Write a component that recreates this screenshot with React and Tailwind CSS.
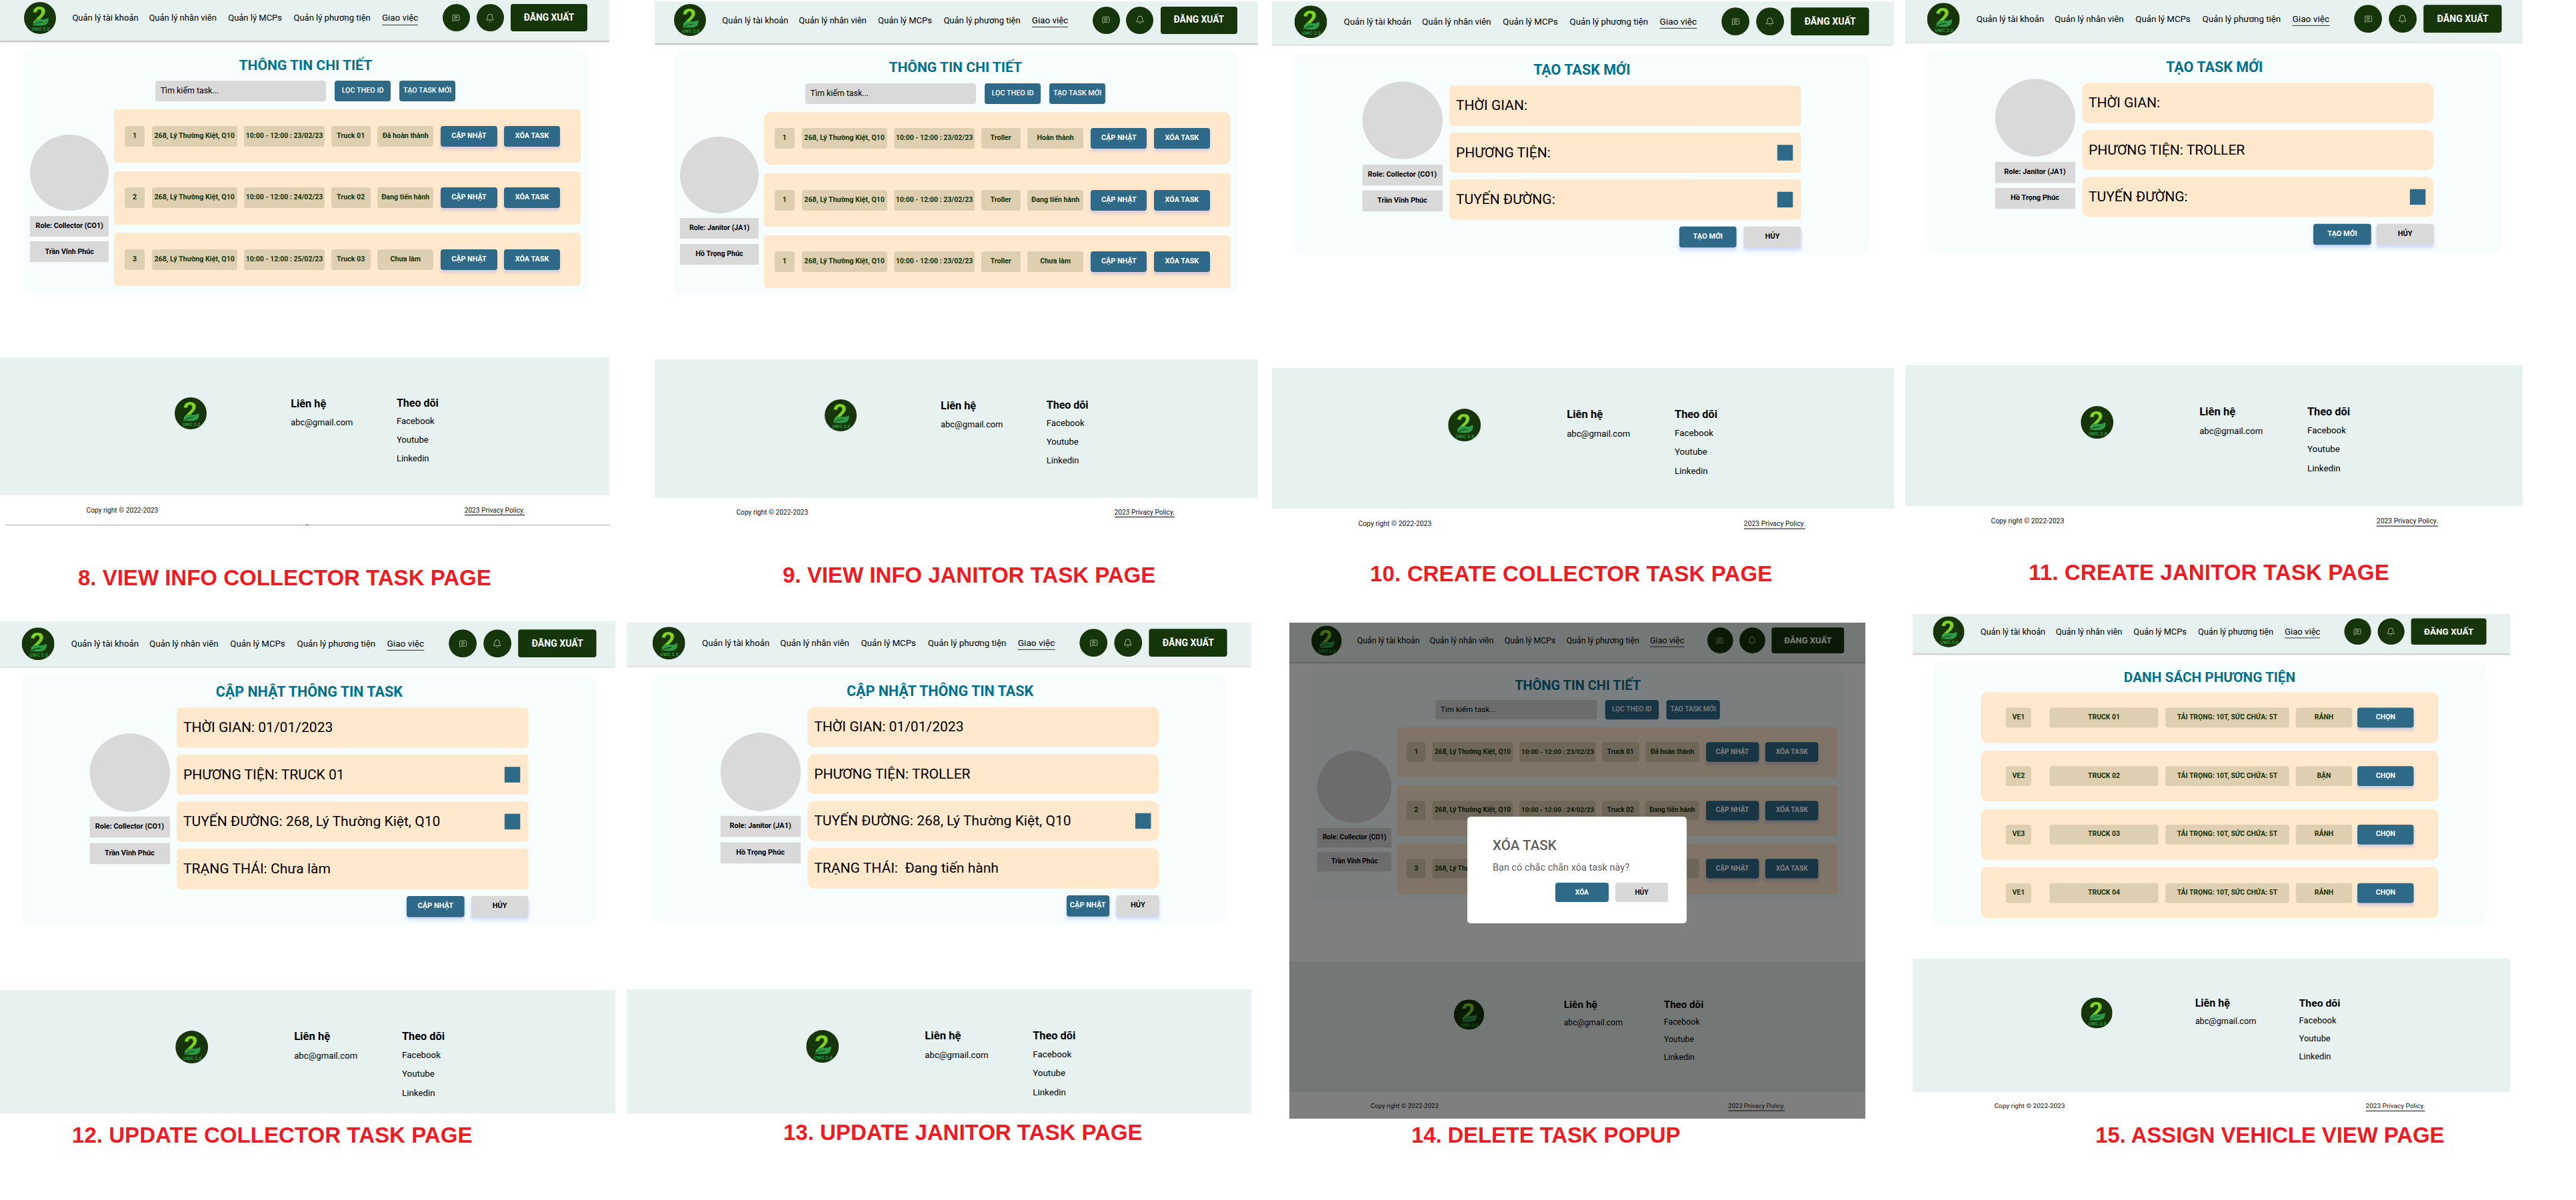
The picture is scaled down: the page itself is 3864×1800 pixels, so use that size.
import { Bell, MessageSquareText } from "lucide-react";

const BTN_SHADOW = "shadow-[0_4px_4px_rgba(110,130,255,0.28)]";

function Logo() {
  return (
    <svg viewBox="0 0 48 48" className="size-[48px] shrink-0">
      <defs>
        <linearGradient id="lime" x1="0" y1="0" x2="0" y2="1">
          <stop offset="0" stopColor="#86d61f" />
          <stop offset="1" stopColor="#6fc928" />
        </linearGradient>
      </defs>
      <circle cx="24" cy="24" r="24" fill="#16350a" />
      <text x="23" y="33" textAnchor="middle" fontFamily="Roboto" fontWeight="700" fontSize="37" fill="url(#lime)">
        2
      </text>
      <path d="M13 36 C14.5 28 19 25 25 26 C30 27 33 25.5 36.5 24 C37.5 31.5 34 35.5 25 35.5 C20 35.5 16 34.5 13 36 Z" fill="#2c9a46" />
      <path d="M14 35.5 C17.5 31.5 22 30.5 28 30.3" fill="none" stroke="#16350a" strokeWidth="1" />
      <text x="25" y="43.2" textAnchor="middle" fontFamily="Roboto" fontWeight="700" fontSize="6.8" textLength="27" fill="#2c9a46">
        UWC 2.0
      </text>
    </svg>
  );
}

function Header({ pad, lift }) {
  return (
    <header className={`flex h-[69px] items-center bg-[#e7f1ef] shadow-[0_2px_2px_rgba(0,0,0,0.28)] ${pad} ${lift}`}>
      <Logo />
      <nav className="ml-[24.5px] flex w-[555.4px] items-center text-[13px] leading-none text-black">
        <span className="w-[115px]">Quản lý tài khoản</span>
        <span className="w-[118.8px]">Quản lý nhân viên</span>
        <span className="w-[98.3px]">Quản lý MCPs</span>
        <span className="w-[132.4px]">Quản lý phương tiện</span>
        <span className="relative text-[13.4px]">
          Giao việc
          <span className="absolute inset-x-0 -bottom-[4px] h-px bg-[#333]" />
        </span>
      </nav>
      <div className="flex size-[41px] shrink-0 items-center justify-center rounded-full bg-[#16350a]">
        <MessageSquareText size={12} strokeWidth={1.6} className="text-[#c3cdbf]" />
      </div>
      <div className="ml-[9.8px] flex size-[41px] shrink-0 items-center justify-center rounded-full bg-[#16350a]">
        <Bell size={14} strokeWidth={1.5} className="text-[#c3cdbf]" />
      </div>
      <div className="ml-[10.4px] flex h-[41px] w-[115px] shrink-0 items-center justify-center rounded-[4px] bg-[#16350a] text-[13.8px] leading-none font-bold text-white">
        ĐĂNG XUẤT
      </div>
    </header>
  );
}

function Footer({ shift, legal }) {
  return (
    <footer>
      <div className="h-[207.6px] bg-[#e7f1ef] pt-[60px]">
        <div className={`flex text-black ${shift}`}>
          <div className="w-[226px] shrink-0" />
          <Logo />
          <div className="ml-[126.3px] w-[158.7px] leading-none">
            <div className="mt-[3px] flex h-[14px] items-center text-[16.3px] font-bold">Liên hệ</div>
            <div className="mt-[14.4px] flex h-[14px] items-center text-[12.9px]">abc@gmail.com</div>
          </div>
          <div className="leading-none">
            <div className="mt-[2px] flex h-[14px] items-center text-[16px] font-bold">Theo dõi</div>
            <div className="mt-[12.7px] flex h-[14px] items-center text-[13.1px]">Facebook</div>
            <div className="mt-[14px] flex h-[14px] items-center text-[13.1px]">Youtube</div>
            <div className="mt-[14px] flex h-[14px] items-center text-[13.1px]">Linkedin</div>
          </div>
        </div>
      </div>
      {legal && (
        <div className={`flex h-[45px] items-center text-[10.2px] leading-none whitespace-nowrap text-[#111] ${shift}`}>
          <span className="ml-[93.7px] w-[567.1px] shrink-0">Copy right © 2022-2023</span>
          <span className="relative">
            2023 Privacy Policy.
            <span className="absolute inset-x-0 -bottom-[2px] h-px bg-black" />
          </span>
        </div>
      )}
    </footer>
  );
}

function Profile({ role, name, offset, left }) {
  return (
    <div className={`w-[118px] shrink-0 text-[10.7px] leading-none font-bold text-black ${left} ${offset}`}>
      <div className="h-[114.4px] rounded-[50%] bg-[#d9d9d9]" />
      <div className="mt-[7.5px] flex h-[31px] items-center justify-center bg-[#d9d9d9]">{role}</div>
      <div className="mt-[7.6px] flex h-[31px] items-center justify-center bg-[#d9d9d9]">{name}</div>
    </div>
  );
}

function Title({ children }) {
  return (
    <h1 className="flex h-[47px] items-center justify-center text-[21.1px] leading-none font-bold text-[#04718c]">{children}</h1>
  );
}

function Pill({ children, width }) {
  return (
    <div className={`flex h-[31px] shrink-0 items-center justify-center rounded-[4px] bg-[#ddcfaf] text-[#16350a] ${width}`}>
      {children}
    </div>
  );
}

function Action({ children, width = "w-[84.3px]", tone = "bg-[#2e6a87] text-white" }) {
  return (
    <div className={`flex h-[31px] shrink-0 items-center justify-center rounded-[4px] text-[10.8px] leading-none font-bold ${BTN_SHADOW} ${tone} ${width}`}>
      {children}
    </div>
  );
}

function TaskList({ role, name, rows, firstRadius = "first:rounded-[5px]" }) {
  return (
    <section className="h-[364.8px] w-[845px] rounded-[10px] bg-[#f7fdfd]">
      <Title>THÔNG TIN CHI TIẾT</Title>
      <div className="flex pl-[197.3px] leading-none">
        <div className="flex h-[31px] w-[255.7px] items-center rounded-[4px] bg-[#d9d9d9] pl-[7.5px] text-[12.4px] text-black">
          Tìm kiếm task...
        </div>
        <div className="ml-[13px] flex h-[31px] w-[84.5px] items-center justify-center rounded-[4px] bg-[#2e6a87] text-[10.8px] font-medium text-white">
          LỌC THEO ID
        </div>
        <div className="ml-[12.6px] flex h-[31px] w-[84.5px] items-center justify-center rounded-[4px] bg-[#2e6a87] text-[10.8px] font-medium text-white">
          TẠO TASK MỚI
        </div>
      </div>
      <div className="mt-[12.3px] flex">
        <Profile role={role} name={name} left="ml-[9.3px]" offset="mt-[37.6px]" />
        <div className="ml-[8.2px] flex flex-col gap-[12.8px]">
          {rows.map((r, i) => (
            <div
              key={i}
              className={`flex h-[79.7px] w-[699.6px] items-center rounded-[5px] bg-[#ffe8cc] pl-[15.5px] text-[10.7px] leading-none font-bold whitespace-nowrap ${firstRadius}`}
            >
              <Pill width="w-[30.3px]">{r[0]}</Pill>
              <Pill width="ml-[10.5px] w-[128px]">268, Lý Thường Kiệt, Q10</Pill>
              <Pill width="ml-[10.6px] w-[120.6px] text-[10.5px]">{r[1]}</Pill>
              <Pill width="ml-[9.9px] w-[58.9px]">{r[2]}</Pill>
              <Pill width="ml-[10.5px] w-[84.2px]">{r[3]}</Pill>
              <Action width="ml-[11px] w-[84.2px]">CẬP NHẬT</Action>
              <Action width="ml-[10.4px] w-[84.2px]">XÓA TASK</Action>
            </div>
          ))}
        </div>
      </div>
    </section>
  );
}

function TaskForm({ title, role, name, avatar, fields, radius, submit, size, buttonWidth, gap }) {
  return (
    <section className={`w-[845px] rounded-[10px] bg-[#f7fdfd] ${size}`}>
      <Title>{title}</Title>
      <div className="flex">
        <Profile role={role} name={name} left="ml-[99.4px]" offset={avatar} />
        <div className="ml-[10.3px] flex w-[517.3px] flex-col gap-[10px]">
          {fields.map(([label, picker]) => (
            <div
              key={label}
              className={`flex h-[59.2px] items-center justify-between bg-[#ffe8cc] pr-[11.8px] pl-[9.7px] text-[20.65px] leading-none whitespace-pre text-black ${radius}`}
            >
              {label}
              {picker && <div className="size-[23.3px] bg-[#2e6a87]" />}
            </div>
          ))}
          <div className={`flex justify-end ${gap}`}>
            <Action width={buttonWidth}>{submit}</Action>
            <Action width={buttonWidth} tone="bg-[#d9d9d9] text-black">
              HỦY
            </Action>
          </div>
        </div>
      </div>
    </section>
  );
}

function VehicleList() {
  const rows = [
    ["VE1", "TRUCK 01", "RẢNH"],
    ["VE2", "TRUCK 02", "BẬN"],
    ["VE3", "TRUCK 03", "RẢNH"],
    ["VE1", "TRUCK 04", "RẢNH"],
  ];
  return (
    <section className="h-[410.7px] w-[845px] rounded-[10px] bg-[#f7fdfd]">
      <Title>DANH SÁCH PHƯƠNG TIỆN</Title>
      <div className="ml-[73px] flex flex-col gap-[11.4px]">
        {rows.map((r, i) => (
          <div
            key={i}
            className="flex h-[79.5px] w-[699.4px] items-center rounded-[10px] bg-[#ffe8cc] pl-[38px] text-[10.6px] leading-none font-bold whitespace-nowrap"
          >
            <Pill width="w-[39.3px]">{r[0]}</Pill>
            <Pill width="ml-[27.7px] w-[166.4px]">{r[1]}</Pill>
            <Pill width="ml-[10.6px] w-[188.8px]">TẢI TRỌNG: 10T, SỨC CHỨA: 5T</Pill>
            <Pill width="ml-[10.6px] w-[85.3px]">{r[2]}</Pill>
            <Action width="ml-[8.8px] w-[85.4px]">CHỌN</Action>
          </div>
        ))}
      </div>
    </section>
  );
}

/* One mock-up: a clipped window that holds a scaled page, with its caption below. */
function Board({ place, frame, page, pad, shift, lift, caption, captionPlace, overlay, rule, legal = true, children }) {
  return (
    <div className={`flex shrink-0 flex-col ${place}`}>
      <div className={`relative overflow-hidden bg-white ${frame}`}>
        <div className={`origin-top-left ${page}`}>
          <Header pad={pad} lift={lift} />
          <main className={`h-[474.5px] pt-[12.8px] ${shift}`}>{children}</main>
          <Footer shift={shift} legal={legal} />
        </div>
        {overlay}
      </div>
      {rule}
      <h2 className={`flex h-10 items-center font-['Liberation_Sans',Arial,sans-serif] text-[33px] leading-none font-bold whitespace-nowrap text-[#ed1c24] ${captionPlace}`}>
        {caption}
      </h2>
    </div>
  );
}

function DeletePopup() {
  return (
    <div className="absolute inset-0 bg-black/50">
      <div className="absolute top-[291px] left-[267px] h-[160px] w-[329px] rounded-[5px] bg-white pl-[38px] leading-none text-[#606060]">
        <div className="mt-[33.5px] flex h-5 items-center text-[20.6px] font-medium">XÓA TASK</div>
        <div className="mt-[14px] flex h-5 items-center text-[14.5px]">Bạn có chắc chắn xóa task này?</div>
        <div className="mt-[11.8px] flex gap-[9.8px] pl-[94px] text-[10.2px] font-bold">
          <div className="flex h-[29px] w-[79.8px] items-center justify-center rounded-[4px] bg-[#2e6a87] text-white">XÓA</div>
          <div className="flex h-[29px] w-[79.8px] items-center justify-center rounded-[4px] bg-[#d9d9d9] text-black">HỦY</div>
        </div>
      </div>
    </div>
  );
}

const COLLECTOR = { role: "Role: Collector (CO1)", name: "Trần Vĩnh Phúc" };
const JANITOR = { role: "Role: Janitor (JA1)", name: "Hồ Trọng Phúc" };

const COLLECTOR_ROWS = [
  ["1", "10:00 - 12:00 : 23/02/23", "Truck 01", "Đã hoàn thành"],
  ["2", "10:00 - 12:00 : 24/02/23", "Truck 02", "Đang tiến hành"],
  ["3", "10:00 - 12:00 : 25/02/23", "Truck 03", "Chưa làm"],
];
const JANITOR_ROWS = [
  ["1", "10:00 - 12:00 : 23/02/23", "Troller", "Hoàn thành"],
  ["1", "10:00 - 12:00 : 23/02/23", "Troller", "Đang tiến hành"],
  ["1", "10:00 - 12:00 : 23/02/23", "Troller", "Chưa làm"],
];

export default function App() {
  return (
    <div className="h-[1800px] w-[3864px] overflow-hidden bg-white font-['Roboto','Noto_Sans',sans-serif]">
      <div className="flex h-[921px] items-start">
        <Board
          place="w-[914px]"
          frame="h-[787px] w-[914px]"
          page="w-[914px]"
          pad="pl-[35.9px]"
          shift="ml-[35.9px]"
          lift="-mt-[7.7px]"
          caption="8. VIEW INFO COLLECTOR TASK PAGE"
          captionPlace="mt-[58px] ml-[117px]"
          rule={
            <div className="ml-2 flex h-px w-[906px] justify-center bg-[#a5b1c9]">
              <div className="h-px w-1 bg-[#333c50]" />
            </div>
          }
        >
          <TaskList {...COLLECTOR} rows={COLLECTOR_ROWS} />
        </Board>

        <Board
          place="mt-[2px] ml-[68px] w-[905px]"
          frame="h-[788px] w-[905px]"
          page="w-[905px]"
          pad="pl-[28.8px]"
          shift="ml-[28.8px]"
          lift="-mt-[6.3px]"
          caption="9. VIEW INFO JANITOR TASK PAGE"
          captionPlace="mt-[52px] ml-[192px]"
        >
          <TaskList {...JANITOR} rows={JANITOR_ROWS} firstRadius="first:rounded-[10px]" />
        </Board>

        <Board
          place="mt-[2px] ml-[21px] w-[933px]"
          frame="h-[806px] w-[933px]"
          page="w-[915px] scale-[1.02]"
          pad="pl-[33.2px]"
          shift="ml-[33.2px]"
          lift="-mt-[5.4px]"
          caption="10. CREATE COLLECTOR TASK PAGE"
          captionPlace="mt-[32px] ml-[147px] tracking-[0.15px]"
        >
          <TaskForm
            {...COLLECTOR}
            title="TẠO TASK MỚI"
            size="h-[296px]"
            avatar="-mt-[6.2px]"
            radius="rounded-[5px]"
            fields={[["THỜI GIAN:"], ["PHƯƠNG TIỆN:", true], ["TUYẾN ĐƯỜNG:", true]]}
            submit="TẠO MỚI"
            gap="gap-[10.7px]"
          />
        </Board>

        <Board
          place="ml-[17px] w-[926px]"
          frame="h-[800px] w-[926px]"
          page="w-[908px] scale-[1.02]"
          pad="pl-[32.2px]"
          shift="ml-[32.2px]"
          lift="-mt-[6.8px]"
          caption="11. CREATE JANITOR TASK PAGE"
          captionPlace="mt-[38px] ml-[185px] tracking-[0.15px]"
        >
          <TaskForm
            {...JANITOR}
            title="TẠO TASK MỚI"
            size="h-[296px]"
            avatar="-mt-[6.2px]"
            radius="rounded-[10px]"
            fields={[["THỜI GIAN:"], ["PHƯƠNG TIỆN: TROLLER"], ["TUYẾN ĐƯỜNG:", true]]}
            submit="TẠO MỚI"
            gap="gap-[8.2px]"
          />
        </Board>
      </div>

      <div className="flex items-start">
        <Board
          place="mt-[11px] w-[923px]"
          frame="h-[738px] w-[923px]"
          page="w-[905px] scale-[1.02]"
          pad="pl-[32.2px]"
          shift="ml-[32.2px]"
          lift="-mt-[1.7px]"
          legal={false}
          caption="12. UPDATE COLLECTOR TASK PAGE"
          captionPlace="mt-[12px] ml-[108px] tracking-[0.05px]"
        >
          <TaskForm
            {...COLLECTOR}
            title="CẬP NHẬT THÔNG TIN TASK"
            size="h-[365px]"
            avatar="mt-[38.4px]"
            radius="rounded-[5px]"
            fields={[
              ["THỜI GIAN: 01/01/2023"],
              ["PHƯƠNG TIỆN: TRUCK 01", true],
              ["TUYẾN ĐƯỜNG: 268, Lý Thường Kiệt, Q10", true],
              ["TRẠNG THÁI: Chưa làm"],
            ]}
            submit="CẬP NHẬT"
            gap="gap-[10.2px]"
          />
        </Board>

        <Board
          place="mt-[13px] ml-[17px] w-[937px]"
          frame="h-[736px] w-[937px]"
          page="w-[919px] scale-[1.02]"
          pad="pl-[38.3px]"
          shift="ml-[38.3px]"
          lift="-mt-[4.9px]"
          legal={false}
          caption="13. UPDATE JANITOR TASK PAGE"
          captionPlace="mt-[8px] ml-[235px]"
        >
          <TaskForm
            {...JANITOR}
            title="CẬP NHẬT THÔNG TIN TASK"
            size="h-[365px]"
            avatar="mt-[38.4px]"
            radius="rounded-[10px]"
            fields={[
              ["THỜI GIAN: 01/01/2023"],
              ["PHƯƠNG TIỆN: TROLLER"],
              ["TUYẾN ĐƯỜNG: 268, Lý Thường Kiệt, Q10", true],
              ["TRẠNG THÁI:  Đang tiến hành"],
            ]}
            submit="CẬP NHẬT"
            buttonWidth="w-[63px]"
            gap="gap-[10.7px]"
          />
        </Board>

        <Board
          place="mt-[13px] ml-[57px] w-[864px]"
          frame="h-[744px] w-[864px]"
          page="w-[915px] scale-[0.9456]"
          pad="pl-[35.1px]"
          shift="ml-[35.1px]"
          lift="-mt-[6.5px]"
          caption="14. DELETE TASK POPUP"
          captionPlace="mt-[4px] ml-[183px] tracking-[-0.15px]"
          overlay={<DeletePopup />}
        >
          <TaskList {...COLLECTOR} rows={COLLECTOR_ROWS} />
        </Board>

        <Board
          place="ml-[71px] w-[896px]"
          frame="h-[751px] w-[896px]"
          page="w-[912.5px] scale-x-[0.9824] scale-y-[0.964]"
          pad="pl-[31px]"
          shift="ml-[31px]"
          lift="-mt-[7.3px]"
          caption="15. ASSIGN VEHICLE VIEW PAGE"
          captionPlace="mt-[10px] ml-[274px] tracking-[-0.1px]"
        >
          <VehicleList />
        </Board>
      </div>
    </div>
  );
}
